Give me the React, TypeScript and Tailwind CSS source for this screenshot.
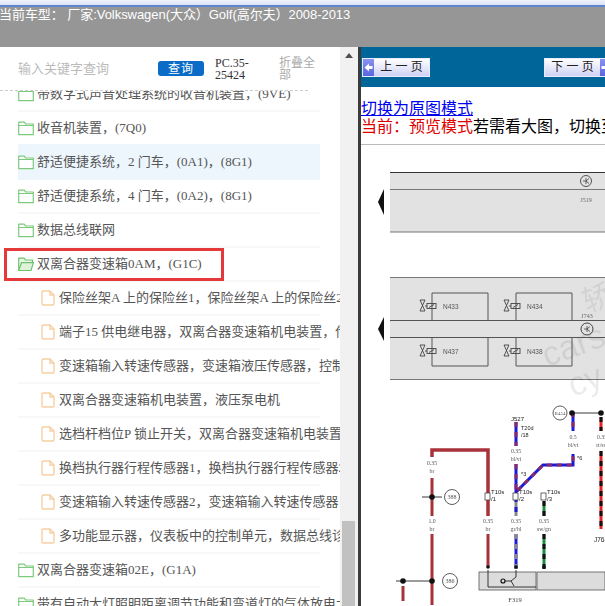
import React from "react";

const serif = "font-['Liberation_Serif','Noto_Sans_CJK_SC',serif]";

function Folder({ open }: { open?: boolean }) {
  return (
    <svg width="16" height="15" viewBox="0 0 16 15" className="shrink-0">
      {open ? (
        <>
          <path d="M0.7 13.5V1.2H6L7.5 3H14.5V5.5" fill="#e9f6e6" stroke="#6fc16f" strokeWidth="1.2" />
          <path d="M0.7 13.5L3.5 5.7H15.4L13 13.5Z" fill="#dff3da" stroke="#6fc16f" strokeWidth="1.2" />
        </>
      ) : (
        <path d="M0.7 13.7V1.2H6.2L7.7 3H15.3V13.7ZM0.7 4.5H15.3" fill="#fff" stroke="#7ccb7c" strokeWidth="1.2" strokeLinejoin="round" />
      )}
    </svg>
  );
}

function Doc() {
  return (
    <svg width="14" height="16" viewBox="0 0 14 16" className="shrink-0">
      <path d="M1 2a1 1 0 0 1 1-1h7l4 4v9a1 1 0 0 1-1 1H2a1 1 0 0 1-1-1Z M9 1v4h4" fill="#fff" stroke="#f6cfa4" strokeWidth="1.4" />
    </svg>
  );
}

type Row = { t: string; doc?: boolean; open?: boolean; hi?: boolean };
const rows: Row[] = [
  { t: "带数字式声音处理系统的收音机装置，(9VE)" },
  { t: "收音机装置，(7Q0)" },
  { t: "舒适便捷系统，2 门车，(0A1)，(8G1)", hi: true },
  { t: "舒适便捷系统，4 门车，(0A2)，(8G1)" },
  { t: "数据总线联网" },
  { t: "双离合器变速箱0AM，(G1C)", open: true },
  { t: "保险丝架A 上的保险丝1，保险丝架A 上的保险丝2，保险丝", doc: true },
  { t: "端子15 供电继电器，双离合器变速箱机电装置，传感器", doc: true },
  { t: "变速箱输入转速传感器，变速箱液压传感器，控制单元", doc: true },
  { t: "双离合器变速箱机电装置，液压泵电机", doc: true },
  { t: "选档杆档位P 锁止开关，双离合器变速箱机电装置，控制", doc: true },
  { t: "换档执行器行程传感器1，换档执行器行程传感器2，离合", doc: true },
  { t: "变速箱输入转速传感器2，变速箱输入转速传感器，离合", doc: true },
  { t: "多功能显示器，仪表板中的控制单元，数据总线诊断接口", doc: true },
  { t: "双离合器变速箱02E，(G1A)" },
  { t: "带有自动大灯照明距离调节功能和弯道灯的气体放电大灯" },
];

function PageButton({ label, dir }: { label: string; dir: "l" | "r" }) {
  const arrow = (
    <div className="flex h-full w-[11px] shrink-0 items-center justify-center bg-gradient-to-b from-[#8a92f0] to-[#5a66e0]">
      <svg width="9" height="9" viewBox="0 0 9 9">
        <path d={dir === "l" ? "M0.5 4.5L5 0.5V3H8.5V6H5V8.5Z" : "M8.5 4.5L4 0.5V3H0.5V6H4V8.5Z"} fill="#fff" />
      </svg>
    </div>
  );
  return (
    <div className="flex h-[19px] w-[68px] shrink-0 items-center border border-[#e8ecff] bg-gradient-to-b from-[#ffffff] to-[#cfd2f5]">
      {dir === "l" && arrow}
      <span className="flex-1 text-center text-[12px] leading-none whitespace-pre text-[#222]">{label}</span>
      {dir === "r" && arrow}
    </div>
  );
}

function Wire({ d, a, b, w = 3 }: { d: string; a: string; b: string; w?: number }) {
  return (
    <>
      <path d={d} fill="none" stroke={a} strokeWidth={w} />
      <path d={d} fill="none" stroke={b} strokeWidth={w} strokeDasharray="5 5" />
    </>
  );
}

function Lbl({ x, y, t, s = 5.8, c = "#555" }: { x: number; y: number; t: string; s?: number; c?: string }) {
  return (
    <text x={x} y={y} fontSize={s} fill={c} textAnchor="middle" fontFamily="'Liberation Serif',serif">
      {t}
    </text>
  );
}

function Tag({ x, y, t, s = 6 }: { x: number; y: number; t: string; s?: number }) {
  return (
    <text x={x} y={y} fontSize={s} fill="#222" fontFamily="'Liberation Sans',sans-serif">
      {t}
    </text>
  );
}

function Solenoid({ x, y, t }: { x: number; y: number; t: string }) {
  return (
    <g stroke="#444" strokeWidth="0.9" fill="none">
      <path d={`M${x - 12} ${y - 6}h5l-5 11h5Z`} />
      <rect x={x - 5} y={y - 2.5} width="9" height="5" />
      <path d={`M${x - 7} ${y}h2M${x - 3} ${y + 1.5}l5 -3`} />
      <text x={x + 11} y={y + 2.5} fontSize="6.5" fill="#555" stroke="none" fontFamily="'Liberation Sans',sans-serif">
        {t}
      </text>
    </g>
  );
}

function Diagram() {
  return (
    <svg width="244" height="460" viewBox="0 0 244 460" className="blur-[0.4px]">
      {/* top block */}
      <rect x="29" y="27" width="215" height="60" fill="#e2e2e2" />
      <path d="M29 27.5H244" stroke="#333" strokeWidth="1" />
      <path d="M29 44.5H244" stroke="#777" strokeWidth="1" />
      <path d="M29 87H244" stroke="#777" strokeWidth="1" />
      <circle cx="225" cy="36" r="5.5" fill="none" stroke="#555" />
      <path d="M222 36h3M225 33v6M225 36l3 -2.5M225 36l3 2.5" stroke="#444" strokeWidth="0.8" fill="none" />
      <Lbl x={225} y={57} t="J519" s={6} c="#666" />
      <path d="M23 44L17 57L23 70Z" fill="#111" />
      {/* second block */}
      <rect x="29" y="132" width="215" height="103" fill="#e2e2e2" />
      <path d="M29 132.5H244M29 234.5H244" stroke="#777" strokeWidth="1" />
      {/* watermark */}
      <text x="226" y="168" fontSize="30" fill="#000" fillOpacity="0.07" fontFamily="'Noto Sans CJK SC',sans-serif" transform="rotate(-20 226 168)">轿</text>
      <text x="186" y="222" fontSize="34" fill="#000" fillOpacity="0.08" fontFamily="'Liberation Sans',sans-serif" transform="rotate(-20 186 222)">cars</text>
      <text x="212" y="252" fontSize="34" fill="#000" fillOpacity="0.08" fontFamily="'Liberation Sans',sans-serif" transform="rotate(-20 212 252)">cy</text>
      <path d="M29 175.5H244M29 192.5H244" stroke="#555" strokeWidth="1" />
      <path d="M23 172L17 184L23 196Z" fill="#111" />
      <g fill="none" stroke="#555" strokeWidth="1">
        <path d="M71 175V148H127V175M155 175V148H211V175M71 193V221H127V193M155 193V221H211V193" />
      </g>
      <Solenoid x={71} y={161} t="N433" />
      <Solenoid x={155} y={161} t="N434" />
      <Solenoid x={71} y={206} t="N437" />
      <Solenoid x={155} y={206} t="N438" />
      <Lbl x={226} y={173} t="J743" s={6} c="#666" />
      <circle cx="226" cy="184" r="6" fill="none" stroke="#444" />
      <path d="M223 184h3M226 181v6M226 184l3 -2.5M226 184l3 2.5" stroke="#444" strokeWidth="0.8" fill="none" />
      {/* black connection lines */}
      <path d="M61 352H81M35 436H73M211 268H239" stroke="#222" strokeWidth="0.9" />
      {/* red wires */}
      <g fill="none" stroke="#a8323a" strokeWidth="3">
        <path d="M71 312V305H127V371" strokeWidth="3.5" />
        <path d="M71 333V371M71 389V460M42 441V456" />
        <path d="M127 389V422" />
      </g>
      <Wire d="M155 277V301" a="#1a1ad8" b="#8a2a6a" />
      <Wire d="M155 319V347L182 320H212V309" a="#1a1ad8" b="#8a2a6a" />
      <Wire d="M212 267V286" a="#1a1ad8" b="#8a2a6a" />
      <Wire d="M155 352V371" a="#888" b="#1a1ad8" />
      <Wire d="M155 389V424" a="#1a1ad8" b="#888" />
      <Wire d="M183 356V371" a="#1b8a3c" b="#111" />
      <Wire d="M183 389V424" a="#1b8a3c" b="#111" />
      <Wire d="M240 272V286M240 306V384" a="#e52222" b="#111" />
      {/* dots */}
      <g fill="#111">
        <circle cx="71" cy="352" r="2.8" />
        <circle cx="71" cy="436" r="2.8" />
        <circle cx="42" cy="436" r="2.8" />
        <circle cx="211" cy="268" r="2.8" />
        <circle cx="240" cy="268" r="2.8" />
        <circle cx="127" cy="422" r="1.8" />
        <circle cx="155" cy="422" r="1.8" />
        <circle cx="183" cy="422" r="1.8" />
      </g>
      {/* circles */}
      <g fill="#fff" stroke="#333" strokeWidth="0.8">
        <circle cx="91" cy="352" r="7.5" />
        <circle cx="89" cy="436" r="7.5" />
        <circle cx="199" cy="268" r="7" />
      </g>
      <Lbl x={91} y={354} t="388" s={6} />
      <Lbl x={89} y={438} t="386" s={6} />
      <Lbl x={199} y={270} t="B454" s={5} />
      {/* connector boxes */}
      <g fill="#fff" stroke="#444" strokeWidth="0.8">
        <rect x="124" y="348" width="5" height="7" />
        <rect x="152" y="348" width="5" height="7" />
        <rect x="180" y="348" width="5" height="7" />
      </g>
      <Tag x={130} y={349} t="T10s" />
      <Tag x={130} y={356} t="/1" />
      <Tag x={158} y={349} t="T10s" />
      <Tag x={158} y={356} t="/2" />
      <Tag x={186} y={349} t="T10s" />
      <Tag x={186} y={356} t="/3" />
      <Lbl x={71} y={320} t="0.35" />
      <Lbl x={71} y={328} t="br" />
      <Lbl x={71} y={378} t="1.0" />
      <Lbl x={71} y={386} t="br" />
      <Lbl x={127} y={378} t="0.35" />
      <Lbl x={127} y={386} t="br" />
      <Lbl x={155} y={378} t="0.35" />
      <Lbl x={155} y={386} t="gr/bl" />
      <Lbl x={183} y={378} t="0.35" />
      <Lbl x={183} y={386} t="sw/gn" />
      <Lbl x={155} y={308} t="0.35" />
      <Lbl x={155} y={316} t="bl/vi" />
      <Lbl x={212} y={294} t="0.5" />
      <Lbl x={212} y={302} t="bl/vi" />
      <Lbl x={241} y={294} t="0.35" />
      <Lbl x={241} y={302} t="rt/sw" />
      <Tag x={150} y={276} t="J527" />
      <Tag x={160} y={285} t="T20d" s={5.5} />
      <Tag x={160} y={292} t="/18" s={5.5} />
      <Tag x={160} y={331} t="*3" s={5.5} />
      <Tag x={216} y={315} t="*6" s={5.5} />
      <Tag x={233} y={397} t="J764" s={6.5} />
      {/* F319 */}
      <rect x="118" y="427" width="57" height="18" fill="#dcdcdc" stroke="#555" strokeWidth="0.8" />
      <rect x="176" y="427" width="68" height="18" fill="#dcdcdc" stroke="#555" strokeWidth="0.8" />
      <path d="M127 425V442H175M155 425V432L150 436H144M150 436L153 441" stroke="#222" strokeWidth="0.9" fill="none" />
      <circle cx="142" cy="436" r="2" fill="none" stroke="#111" strokeWidth="1.2" />
      <Lbl x={154} y={457} t="F319" s={6.5} c="#444" />
    </svg>
  );
}

export default function App() {
  return (
    <div className="flex h-[606px] w-[605px] flex-col overflow-hidden bg-white font-['Liberation_Sans','Noto_Sans_CJK_SC',sans-serif]">
      <div className="h-[5px] shrink-0 bg-gradient-to-b from-[#f0f4fb] to-[#d8e2f6]" />
      <div className="h-[2px] shrink-0 bg-[#5f85cd]" />
      <div className="h-[40px] shrink-0 bg-[#969696] text-[13px] leading-[16px] tracking-[-0.05px] whitespace-nowrap text-white">
        <div className="-ml-[1px]">当前车型： 厂家:Volkswagen(大众）Golf(高尔夫）2008-2013</div>
      </div>
      <div className="flex min-h-0 flex-1">
        <div className="flex w-[358px] shrink-0">
          <div className="flex w-[340px] shrink-0 flex-col">
            <div className="flex h-[43px] shrink-0 items-center pl-[18px]">
              <span className="w-[140px] text-[13px] text-[#bbbbbb]">输入关键字查询</span>
              <span className="flex h-[15px] w-[46px] items-center justify-center rounded-[3px] bg-[#0a6cc6] text-[12px] leading-none tracking-[1px] text-white">查询</span>
              <span className={`ml-[11px] w-[38px] text-[12px] leading-[12px] text-[#333] ${serif}`}>PC.35-25424</span>
              <span className="ml-[26px] w-[38px] text-[12px] leading-[12px] text-[#aaa]">折叠全部</span>
            </div>
            <div className="h-0 w-[308px] shrink-0 border-b border-dashed border-[#ccc]" />
            <div className="min-h-0 flex-1 overflow-hidden">
              <div className="-mt-[13px]">
                {rows.map((r, i) => (
                  <div key={i} className="relative pl-[18px] pr-[20px]">
                    <div className={`flex h-[34px] w-[302px] items-center whitespace-nowrap border-b-2 text-[13px] text-[#555] ${serif} ${r.hi ? "border-[#edf6fd] bg-[#edf6fd] shadow-[0_-2px_0_0_#edf6fd]" : "border-[#f8f8f8]"} ${r.doc ? "pl-[23px]" : ""}`}>
                      {r.doc ? <Doc /> : <Folder open={r.open} />}
                      <span className={r.doc ? "ml-[4px]" : "ml-[3px]"}>{r.t}</span>
                    </div>
                    {r.open && <div className="absolute left-[4px] top-0 h-[33px] w-[220px] border-[3px] border-[#e5383b]" />}
                  </div>
                ))}
              </div>
            </div>
          </div>
          <div className="flex w-[18px] shrink-0 flex-col bg-[#f1f1f1] pr-[3px] pl-[2px]">
            <div className="flex h-[17px] shrink-0 items-center justify-center">
              <svg width="8" height="5" viewBox="0 0 8 5"><path d="M4 0L8 5H0Z" fill="#505050" /></svg>
            </div>
            <div className="mt-[457px] h-[85px] bg-[#c1c1c1]" />
          </div>
        </div>
        <div className="w-[3px] shrink-0 bg-[#3c3c3c]" />
        <div className="flex min-w-0 flex-1 flex-col overflow-hidden">
          <div className="flex h-[40px] shrink-0 items-center justify-between bg-[#006699] pl-[1px]">
            <PageButton label="上 一 页" dir="l" />
            <div className="-mr-[7px]"><PageButton label="下 一 页" dir="r" /></div>
          </div>
          <div className="h-[58px] shrink-0 border-b border-[#bbb] pt-[13px] whitespace-nowrap text-[16px] leading-[18px] text-black">
            <div><span className="text-[#0000ee] underline">切换为原图模式</span></div>
            <div><span className="text-[#e00000]">当前：预览模式</span>若需看大图，切换至原图模式</div>
          </div>
          <Diagram />
        </div>
      </div>
    </div>
  );
}
